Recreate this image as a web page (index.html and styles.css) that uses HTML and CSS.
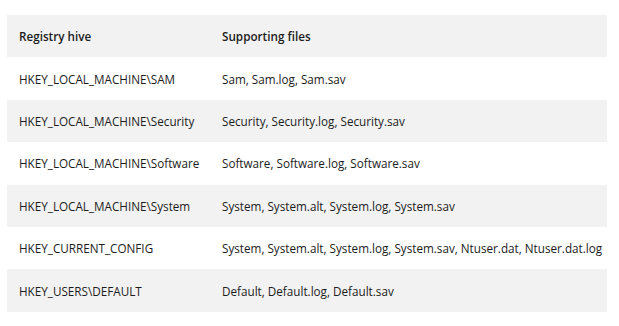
FILE: index.html
```html
<!DOCTYPE html>
<html>
<head>
<meta charset="utf-8">
<link rel="stylesheet" href="styles.css">
</head>
<body>
<table class="reg">
  <thead>
    <tr><th class="c1">Registry hive</th><th>Supporting files</th></tr>
  </thead>
  <tbody>
    <tr><td>HKEY_LOCAL_MACHINE\SAM</td><td>Sam, Sam.log, Sam.sav</td></tr>
    <tr><td>HKEY_LOCAL_MACHINE\Security</td><td>Security, Security.log, Security.sav</td></tr>
    <tr><td>HKEY_LOCAL_MACHINE\Software</td><td>Software, Software.log, Software.sav</td></tr>
    <tr><td>HKEY_LOCAL_MACHINE\System</td><td>System, System.alt, System.log, System.sav</td></tr>
    <tr><td>HKEY_CURRENT_CONFIG</td><td>System, System.alt, System.log, System.sav, Ntuser.dat, Ntuser.dat.log</td></tr>
    <tr><td>HKEY_USERS\DEFAULT</td><td>Default, Default.log, Default.sav</td></tr>
  </tbody>
</table>
</body>
</html>
```

FILE: styles.css
```css
html, body {
  margin: 0;
  background: #fff;
}
body {
  padding: 15px 0 0 7px;
  font-family: "Open Sans", "Noto Sans", sans-serif;
  font-size: 11.7px;
  color: #1c1c1c;
}
.reg {
  border-collapse: collapse;
  width: 600px;
  table-layout: fixed;
}
.reg .c1 {
  width: 191px;
}
.reg th, .reg td {
  text-align: left;
  padding: 0 0 0 12px;
  height: 42.4px;
  white-space: nowrap;
  vertical-align: middle;
}
.reg th {
  font-weight: 600;
}
.reg thead tr,
.reg tbody tr:nth-child(even) {
  background: #f2f2f2;
}
```
